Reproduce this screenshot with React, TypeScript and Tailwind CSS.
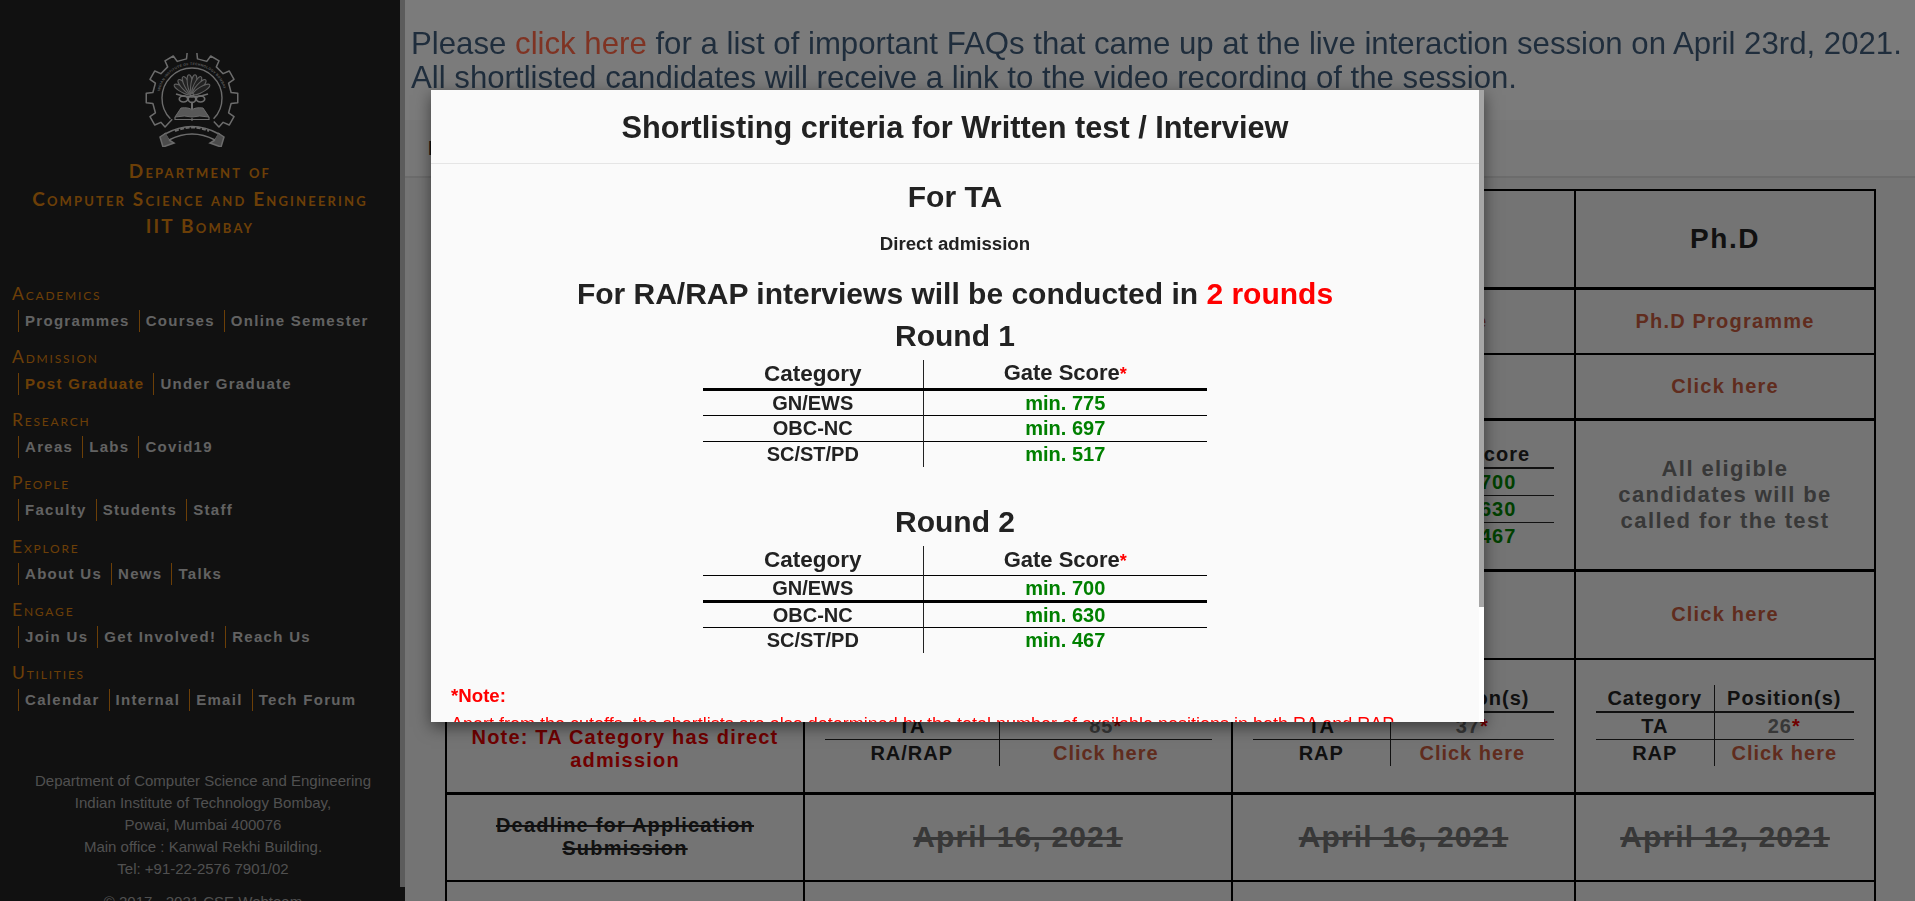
import React from "react";

const polar = (r: number, deg: number) => {
  const a = ((deg - 90) * Math.PI) / 180;
  return `${(47 + r * Math.cos(a)).toFixed(2)} ${(45 + r * Math.sin(a)).toFixed(2)}`;
};

const gearPath = () => {
  const parts: string[] = [`M${polar(29, -137)}`, `L${polar(39.5, -137)}`];
  for (let i = -4; i <= 4; i++) {
    const c = i * 30;
    parts.push(`L${polar(39.5, c - 8)}`, `L${polar(46, c - 6)}`, `L${polar(46, c + 6)}`, `L${polar(39.5, c + 8)}`);
  }
  parts.push(`L${polar(39.5, 137)}`, `L${polar(32, 137)}`);
  return parts.join(" ");
};

function Logo() {
  return (
    <svg width="94" height="94" viewBox="0 0 94 94" fill="none" stroke="#d8d8d8" className="block">
      <path d={gearPath()} strokeWidth="1.5" strokeLinejoin="round" />
      <path d={`M${polar(30, -134)} A30 30 0 1 1 ${polar(30, 134)}`} strokeWidth="1.4" />
      <path id="ring-text" d={`M${polar(33, -130)} A33 33 0 1 1 ${polar(33, 130)}`} stroke="none" />
      <text fontSize="3.4" fill="#b8b8b8" stroke="none" fontFamily="Liberation Sans, sans-serif" fontWeight="700" letterSpacing="0.3">
        <textPath href="#ring-text" startOffset="20%">INDIAN INSTITUTE OF TECHNOLOGY BOMBAY</textPath>
      </text>
      {[-60, -42, -26, -9, 9, 26, 42, 60].map((a) => (
        <ellipse key={a} cx="47" cy="31" rx="2.8" ry="9.5" transform={`rotate(${a} 47 42)`} strokeWidth="1" fill="#444444" stroke="#c0c0c0" />
      ))}
      <path d="M31 41 Q47 47 63 41" strokeWidth="1.4" />
      <ellipse cx="38.5" cy="46" rx="4.2" ry="3" strokeWidth="1.7" />
      <ellipse cx="55.5" cy="46" rx="4.2" ry="3" strokeWidth="1.7" />
      <ellipse cx="47" cy="46" rx="3.8" ry="3.4" strokeWidth="1.7" />
      <path d="M47 49 V56" strokeWidth="2" />
      <path d="M30 64 L36 55 Q44 54 47 57 Q50 54 58 55 L64 64 Q54 62 47 64 Q40 62 30 64Z" fill="#b0b0b0" strokeWidth="1" />
      <path d="M30 64 V66.5 H64 V64" strokeWidth="1.2" />
      <circle cx="47" cy="66.5" r="1.2" fill="#d8d8d8" stroke="none" />
      <path d="M20 81 Q47 66 74 81 L70 87 Q47 75 24 87Z" strokeWidth="1.5" />
      <path d="M21 80 L15 84 L18 94 L29 90 L24 87" strokeWidth="1.5" fill="#999999" />
      <path d="M73 80 L79 84 L76 94 L65 90 L70 87" strokeWidth="1.5" fill="#999999" />
      <path d="M30 78 Q47 71 64 78" strokeWidth="2" strokeDasharray="4 1.5" />
    </svg>
  );
}

const nav: { title: string; links: string[]; active?: string; cls?: string }[] = [
  { title: "Academics", links: ["Programmes", "Courses", "Online Semester"] },
  { title: "Admission", links: ["Post Graduate", "Under Graduate"], active: "Post Graduate" },
  { title: "Research", links: ["Areas", "Labs", "Covid19"] },
  { title: "People", links: ["Faculty", "Students", "Staff"], cls: "mb-[13px]" },
  { title: "Explore", links: ["About Us", "News", "Talks"] },
  { title: "Engage", links: ["Join Us", "Get Involved!", "Reach Us"] },
  { title: "Utilities", links: ["Calendar", "Internal", "Email", "Tech Forum"] },
];

function Sidebar() {
  return (
    <aside className="flex h-screen w-[405px] shrink-0 overflow-hidden bg-[#222222]">
      <div className="w-[400px] shrink-0">
        <div className="flex justify-center pr-[16px] pt-[53px]">
          <Logo />
        </div>
        <div className="mt-[10px] text-center font-['Lato',sans-serif] text-[19px] font-bold leading-[27.5px] tracking-[2.15px] text-[#d87e0f] [font-variant:small-caps]">
          <div>Department of</div>
          <div>Computer Science and Engineering</div>
          <div>IIT Bombay</div>
        </div>
        <nav className="mt-[41px] pl-[12px]">
          {nav.map((s) => (
            <section key={s.title} className={s.cls ?? "mb-[12px]"}>
              <h3 className="h-[29px] font-['Lato',sans-serif] text-[17.5px] font-normal leading-[26px] tracking-[1.8px] text-[#d87e0f] [font-variant:small-caps]">
                {s.title}
              </h3>
              <div className="ml-[6px] flex h-[22px]">
                {s.links.map((l) => (
                  <a
                    key={l}
                    className={`flex h-[22px] items-center whitespace-nowrap border-l border-[#d87e0f] pl-[6px] pr-[9px] text-[15px] font-bold leading-[22px] tracking-[1.3px] ${
                      s.active === l ? "text-[#d87e0f]" : "text-[#c4c4c4]"
                    }`}
                  >
                    {l}
                  </a>
                ))}
              </div>
            </section>
          ))}
        </nav>
        <footer className="mt-[59px] pl-[6px] text-center text-[15px] leading-[22px] text-[#a0a0a0]">
          <div>Department of Computer Science and Engineering</div>
          <div>Indian Institute of Technology Bombay,</div>
          <div>Powai, Mumbai 400076</div>
          <div>Main office : Kanwal Rekhi Building.</div>
          <div>Tel: +91-22-2576 7901/02</div>
          <div className="mt-[11px]">© 2017 - 2021 CSE Webteam</div>
        </footer>
      </div>
      <div className="w-[5px] shrink-0">
        <div className="h-[887px] bg-[#b8b8b8]" />
      </div>
    </aside>
  );
}

function InnerTable({
  head,
  rows,
  width,
  first,
}: {
  head: [string, string];
  rows: [string, React.ReactNode][];
  width: string;
  first: string;
}) {
  return (
    <table className={`mx-auto table-fixed border-collapse text-[20px] font-bold leading-[26px] tracking-[1px] ${width}`}>
      <colgroup>
        <col className={first} />
        <col />
      </colgroup>
      <tbody>
        <tr className="h-[26px] border-b-2 border-[#222222] text-[#222222]">
          <td className="border-r border-[#222222]">{head[0]}</td>
          <td>{head[1]}</td>
        </tr>
        {rows.map(([a, b], i) => (
          <tr key={i} className={`h-[26px] ${i < rows.length - 1 ? "border-b border-[#222222]" : ""}`}>
            <td className="border-r border-[#222222] text-[#222222]">{a}</td>
            <td className="text-[#707070]">{b}</td>
          </tr>
        ))}
      </tbody>
    </table>
  );
}

const Link = ({ children }: { children: React.ReactNode }) => (
  <span className="text-[#c0593c]">{children}</span>
);
const Star = () => <span className="text-[#e00000]">*</span>;
const Green = ({ children }: { children: React.ReactNode }) => (
  <span className="text-[#008000]">{children}</span>
);

function PageTable() {
  const cell = "border-2 border-[#000000] text-center align-middle";
  const big = "text-[20px] font-bold leading-[23px] tracking-[1.2px]";
  const head = "text-[28px] font-bold tracking-[1.5px] text-[#222222]";
  const date = "text-[30px] font-bold leading-[34px] tracking-[1.15px] text-[#707070] line-through";
  return (
    <table className="ml-[40px] mt-[11px] w-[1429px] table-fixed border-collapse">
      <colgroup>
        <col className="w-[358px]" />
        <col className="w-[428px]" />
        <col className="w-[343px]" />
        <col className="w-[300px]" />
      </colgroup>
      <tbody>
        <tr className="h-[98px] border-b-[3px] border-black">
          <td className={cell} />
          <td className={`${cell} ${head}`}>M.Tech</td>
          <td className={`${cell} ${head}`}>M.S</td>
          <td className={`${cell} ${head}`}>Ph.D</td>
        </tr>
        <tr className="h-[66px]">
          <td className={cell} />
          <td className={`${cell} ${big}`}><Link>M.Tech Programme</Link></td>
          <td className={`${cell} ${big}`}><Link>M.S Programme</Link></td>
          <td className={`${cell} ${big}`}><Link>Ph.D Programme</Link></td>
        </tr>
        <tr className="h-[65px] border-b-[3px] border-black">
          <td className={cell} />
          <td className={`${cell} ${big}`}><Link>Click here</Link></td>
          <td className={`${cell} ${big}`}><Link>Click here</Link></td>
          <td className={`${cell} ${big}`}><Link>Click here</Link></td>
        </tr>
        <tr className="h-[151px] border-b-[3px] border-black">
          <td className={cell} />
          <td className={cell} />
          <td className={cell}>
            <InnerTable
              head={["Category", "Gate Score"]}
              width="w-[301px]"
              first="w-[137px]"
              rows={[
                ["GN/EWS", <Green>min. 700</Green>],
                ["OBC-NC", <Green>min. 630</Green>],
                ["SC/ST/PD", <Green>min. 467</Green>],
              ]}
            />
          </td>
          <td className={`${cell} text-[22px] font-bold leading-[26px] tracking-[1.4px] text-[#707070]`}>
            <div className="mx-auto w-[240px]">All eligible candidates will be called for the test</div>
          </td>
        </tr>
        <tr className="h-[89px]">
          <td className={cell} />
          <td className={`${cell} ${big}`}><Link>Click here</Link></td>
          <td className={`${cell} ${big}`}><Link>Click here</Link></td>
          <td className={`${cell} ${big}`}><Link>Click here</Link></td>
        </tr>
        <tr className="h-[134px] border-b-[3px] border-black">
          <td className={`${cell} ${big} text-[#e00000]`}>
            <div className="h-[46px]" />
            <div className="mx-auto w-[330px]">Note: TA Category has direct admission</div>
          </td>
          <td className={cell}>
            <InnerTable
              head={["Category", "Position(s)"]}
              width="w-[387px]"
              first="w-[175px]"
              rows={[
                ["TA", <>85<Star /></>],
                ["RA/RAP", <Link>Click here</Link>],
              ]}
            />
          </td>
          <td className={cell}>
            <InnerTable
              head={["Category", "Position(s)"]}
              width="w-[301px]"
              first="w-[137px]"
              rows={[
                ["TA", <>37<Star /></>],
                ["RAP", <Link>Click here</Link>],
              ]}
            />
          </td>
          <td className={cell}>
            <InnerTable
              head={["Category", "Position(s)"]}
              width="w-[258px]"
              first="w-[118px]"
              rows={[
                ["TA", <>26<Star /></>],
                ["RAP", <Link>Click here</Link>],
              ]}
            />
          </td>
        </tr>
        <tr className="h-[88px]">
          <td className={`${cell} ${big} text-[#222222] line-through`}>
            <div className="mx-auto w-[300px]">Deadline for Application Submission</div>
          </td>
          <td className={`${cell} ${date}`}>April 16, 2021</td>
          <td className={`${cell} ${date}`}>April 16, 2021</td>
          <td className={`${cell} ${date}`}>April 12, 2021</td>
        </tr>
        <tr className="h-[60px]">
          <td className={cell} />
          <td className={cell} />
          <td className={cell} />
          <td className={cell} />
        </tr>
      </tbody>
    </table>
  );
}

function ScoreTable({
  rows,
  lines,
}: {
  rows: [string, string][];
  lines: [string, string, string];
}) {
  return (
    <table className="mx-auto w-[504px] table-fixed border-collapse text-[20px] font-bold leading-[24px] text-[#222222]">
      <colgroup>
        <col className="w-[220px]" />
        <col />
      </colgroup>
      <tbody>
        <tr className={`h-[29px] border-black ${lines[0]}`}>
          <td className="border-r border-[#222222] text-center text-[22.5px]">Category</td>
          <td className="text-center text-[22px]">
            Gate Score<span className="text-[18px] text-[#ff0000]">*</span>
          </td>
        </tr>
        {rows.map(([a, b], i) => (
          <tr key={a} className={`h-[26px] border-black ${lines[i + 1] ?? ""}`}>
            <td className="border-r border-[#222222] text-center">{a}</td>
            <td className="text-center text-[#008000]">{b}</td>
          </tr>
        ))}
      </tbody>
    </table>
  );
}

function Modal() {
  return (
    <div className="fixed left-[431px] top-[90px] z-50 flex h-[632px] w-[1053px] overflow-hidden bg-[#fafafa] font-['Liberation_Sans',Arial,sans-serif] shadow-[0_5px_15px_rgba(0,0,0,0.5)]">
      <div className="flex w-[1048px] shrink-0 flex-col">
        <h2 className="flex h-[74px] shrink-0 items-center justify-center border-b border-[#e5e5e5] pt-[4px] text-[30.72px] font-bold text-[#222222]">
          Shortlisting criteria for Written test / Interview
        </h2>
        <div className="min-h-0 flex-1 overflow-hidden text-center text-[#222222]">
          <h3 className="mt-[14px] text-[30px] font-bold leading-[38px]">For TA</h3>
          <p className="mt-[16px] text-[18.67px] font-bold leading-[24px]">Direct admission</p>
          <h3 className="mt-[19px] text-[30px] font-bold leading-[38px]">
            For RA/RAP interviews will be conducted in <span className="text-[#ff0000]">2 rounds</span>
          </h3>
          <h3 className="mt-[4px] text-[30px] font-bold leading-[38px]">Round 1</h3>
          <div className="mt-[5px]">
            <ScoreTable
              lines={["border-b-[3px]", "border-b", "border-b"]}
              rows={[
                ["GN/EWS", "min. 775"],
                ["OBC-NC", "min. 697"],
                ["SC/ST/PD", "min. 517"],
              ]}
            />
          </div>
          <h3 className="mt-[36px] text-[30px] font-bold leading-[38px]">Round 2</h3>
          <div className="mt-[5px]">
            <ScoreTable
              lines={["border-b", "border-b-[3px]", "border-b"]}
              rows={[
                ["GN/EWS", "min. 700"],
                ["OBC-NC", "min. 630"],
                ["SC/ST/PD", "min. 467"],
              ]}
            />
          </div>
          <div className="mt-[31px] px-[20px] text-left text-[#ff0000]">
            <p className="text-[18.67px] font-bold leading-[24px]">*Note:</p>
            <p className="mt-[4px] text-[18px] leading-[24px]">
              Apart from the cutoffs, the shortlists are also determined by the total number of available positions in both RA and RAP.
            </p>
          </div>
        </div>
      </div>
      <div className="w-[5px] shrink-0 bg-[#ffffff]">
        <div className="h-[517px] bg-[#a6a6a6]" />
      </div>
    </div>
  );
}

export default function App() {
  return (
    <div className="flex h-screen overflow-hidden bg-[#ffffff] font-['Liberation_Sans',Arial,sans-serif]">
      <Sidebar />
      <main className="h-screen min-w-0 flex-1 overflow-hidden bg-[#e8e8e8]">
        <div className="h-[120px] bg-[#f6f6f6] pl-[6px] pt-[27px]">
          <p className="relative z-40 whitespace-nowrap text-[31.2px] leading-[34px] text-[#1f2d3c]">
            Please <span className="text-[#7f3323]">click here</span> for a list of important FAQs that came up at the live interaction session on April 23rd, 2021.
            <br />
            All shortlisted candidates will receive a link to the video recording of the session.
          </p>
        </div>
        <div className="flex h-[58px] items-center border-b-2 border-[#d8d8d8] bg-[#f0f0f0] pl-[23px] text-[20px] font-bold text-[#222222]">
          Dates
        </div>
        <PageTable />
      </main>
      <div className="fixed inset-0 z-30 bg-[rgba(0,0,0,0.5)]" />
      <Modal />
    </div>
  );
}
